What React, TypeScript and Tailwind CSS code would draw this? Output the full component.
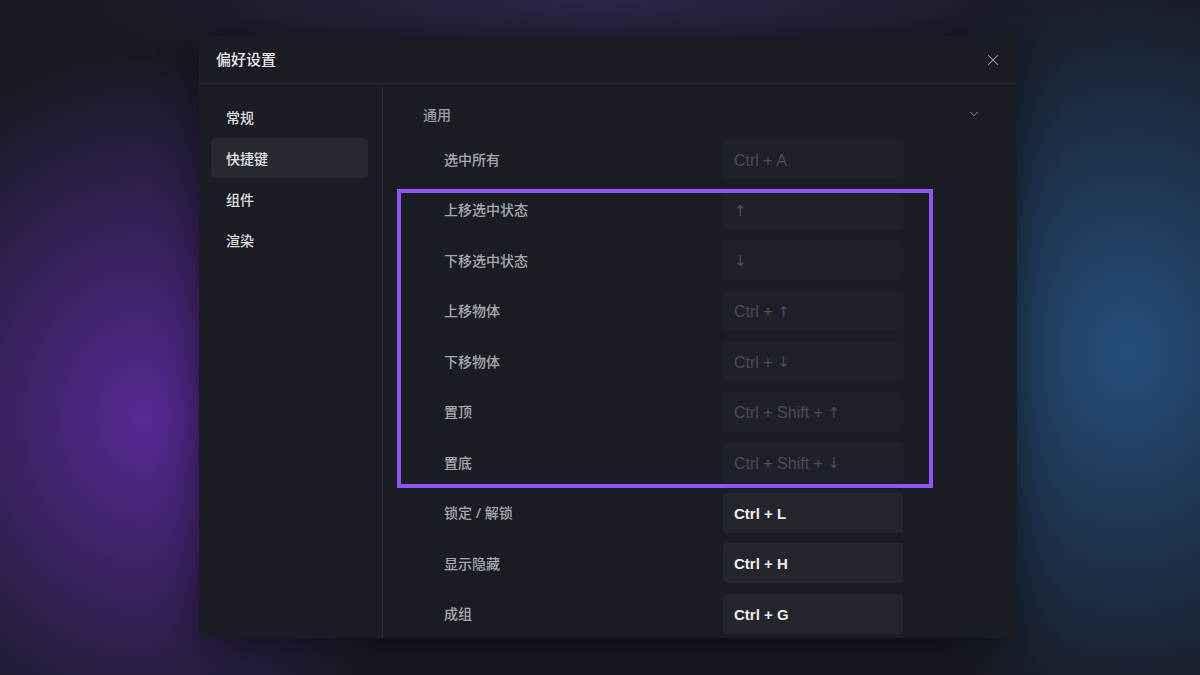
import { X, ChevronDown } from 'lucide-react'

type Shortcut = {
  label: string
  keys: string
  enabled?: boolean
}

const NAV = ['常规', '快捷键', '组件', '渲染']

const SHORTCUTS: Shortcut[] = [
  { label: '选中所有', keys: 'Ctrl + A' },
  { label: '上移选中状态', keys: '↑' },
  { label: '下移选中状态', keys: '↓' },
  { label: '上移物体', keys: 'Ctrl + ↑' },
  { label: '下移物体', keys: 'Ctrl + ↓' },
  { label: '置顶', keys: 'Ctrl + Shift + ↑' },
  { label: '置底', keys: 'Ctrl + Shift + ↓' },
  { label: '锁定 / 解锁', keys: 'Ctrl + L', enabled: true },
  { label: '显示隐藏', keys: 'Ctrl + H', enabled: true },
  { label: '成组', keys: 'Ctrl + G', enabled: true },
]

const cjk = "font-['Noto_Sans','Noto_Sans_CJK_SC',sans-serif]"

// arrows come out too thin in Liberation Sans, DejaVu is closer
function KeyText({ keys }: { keys: string }) {
  return (
    <>
      {keys.split(/([↑↓])/).map((part, i) =>
        part === '↑' || part === '↓' ? (
          <span key={i} className="font-['DejaVu_Sans',sans-serif] text-[15px]">
            {part}
          </span>
        ) : (
          <span key={i} className="whitespace-pre">{part}</span>
        )
      )}
    </>
  )
}

function ShortcutRow({ item }: { item: Shortcut }) {
  return (
    <div className="flex h-10 items-center">
      <span className={`w-[300px] pl-[21px] text-[14px] font-medium text-[#a7a9af] ${cjk}`}>
        {item.label}
      </span>
      {/* key box: dimmed when the shortcut is fixed */}
      <div
        className={
          item.enabled
            ? "flex h-10 w-[180px] items-center rounded-[3px] bg-[#24262e] px-[11px] pt-[3px] font-['Liberation_Sans',sans-serif] text-[15px] font-bold text-[#ececee]"
            : "flex h-10 w-[180px] items-center rounded-[3px] bg-[#1f2129] px-[11px] pt-[3px] font-['Liberation_Sans',sans-serif] text-[16px] text-[#4b4e57]"
        }
      >
        <KeyText keys={item.keys} />
      </div>
    </div>
  )
}

export default function App() {
  return (
    <div className="flex h-[675px] w-[1200px] items-start overflow-hidden bg-[#181a23] bg-[image:radial-gradient(ellipse_300px_360px_at_12%_62%,rgba(112,48,196,0.7),transparent),radial-gradient(ellipse_300px_380px_at_94%_52%,rgba(44,106,170,0.65),transparent),radial-gradient(ellipse_500px_90px_at_50%_0%,rgba(70,60,130,0.4),transparent)] pl-[199px] pt-[36px]">
      <div className="flex h-[602px] w-[818px] flex-col overflow-hidden rounded-[4px] bg-[#1b1d25] shadow-[0_10px_40px_rgba(0,0,0,0.45)]">
        {/* Header */}
        <div className="flex h-12 shrink-0 items-center justify-between border-b border-[#2a2c35] pl-[17px] pr-[15px]">
          <span className={`text-[15px] font-medium text-[#e6e6e8] ${cjk}`}>偏好设置</span>
          <X className="h-[18px] w-[18px] text-[#a9abb1]" strokeWidth={1.4} />
        </div>

        <div className="flex min-h-0 flex-1">
          {/* Sidebar */}
          <div className="flex w-[184px] shrink-0 flex-col gap-px border-r border-[#2a2c35] pl-3 pr-[14px] pt-[13px]">
            {NAV.map((name) => (
              <div
                key={name}
                className={
                  name === '快捷键'
                    ? `flex h-10 items-center rounded-[4px] bg-[#272931] pl-[15px] text-[14px] font-medium text-[#e4e4e6] ${cjk}`
                    : `flex h-10 items-center rounded-[4px] pl-[15px] text-[14px] font-medium text-[#dcdcde] ${cjk}`
                }
              >
                {name}
              </div>
            ))}
          </div>

          {/* Content */}
          <div className="relative flex-1 pl-10 pr-[36px] pt-3">
            <div className="flex h-9 items-center justify-between">
              <span className={`text-[14px] font-medium text-[#9c9ea5] ${cjk}`}>通用</span>
              <ChevronDown className="h-[14px] w-[14px] text-[#8c8f97]" strokeWidth={1.7} />
            </div>

            <div className="mt-[7px] flex flex-col gap-[10.5px]">
              {SHORTCUTS.map((s) => (
                <ShortcutRow key={s.label} item={s} />
              ))}
            </div>

            {/* highlight frame over the arrow shortcuts */}
            <div className="pointer-events-none absolute left-[14px] top-[105px] h-[299px] w-[536px] border-4 border-[#9254f5]" />
          </div>
        </div>
      </div>
    </div>
  )
}
